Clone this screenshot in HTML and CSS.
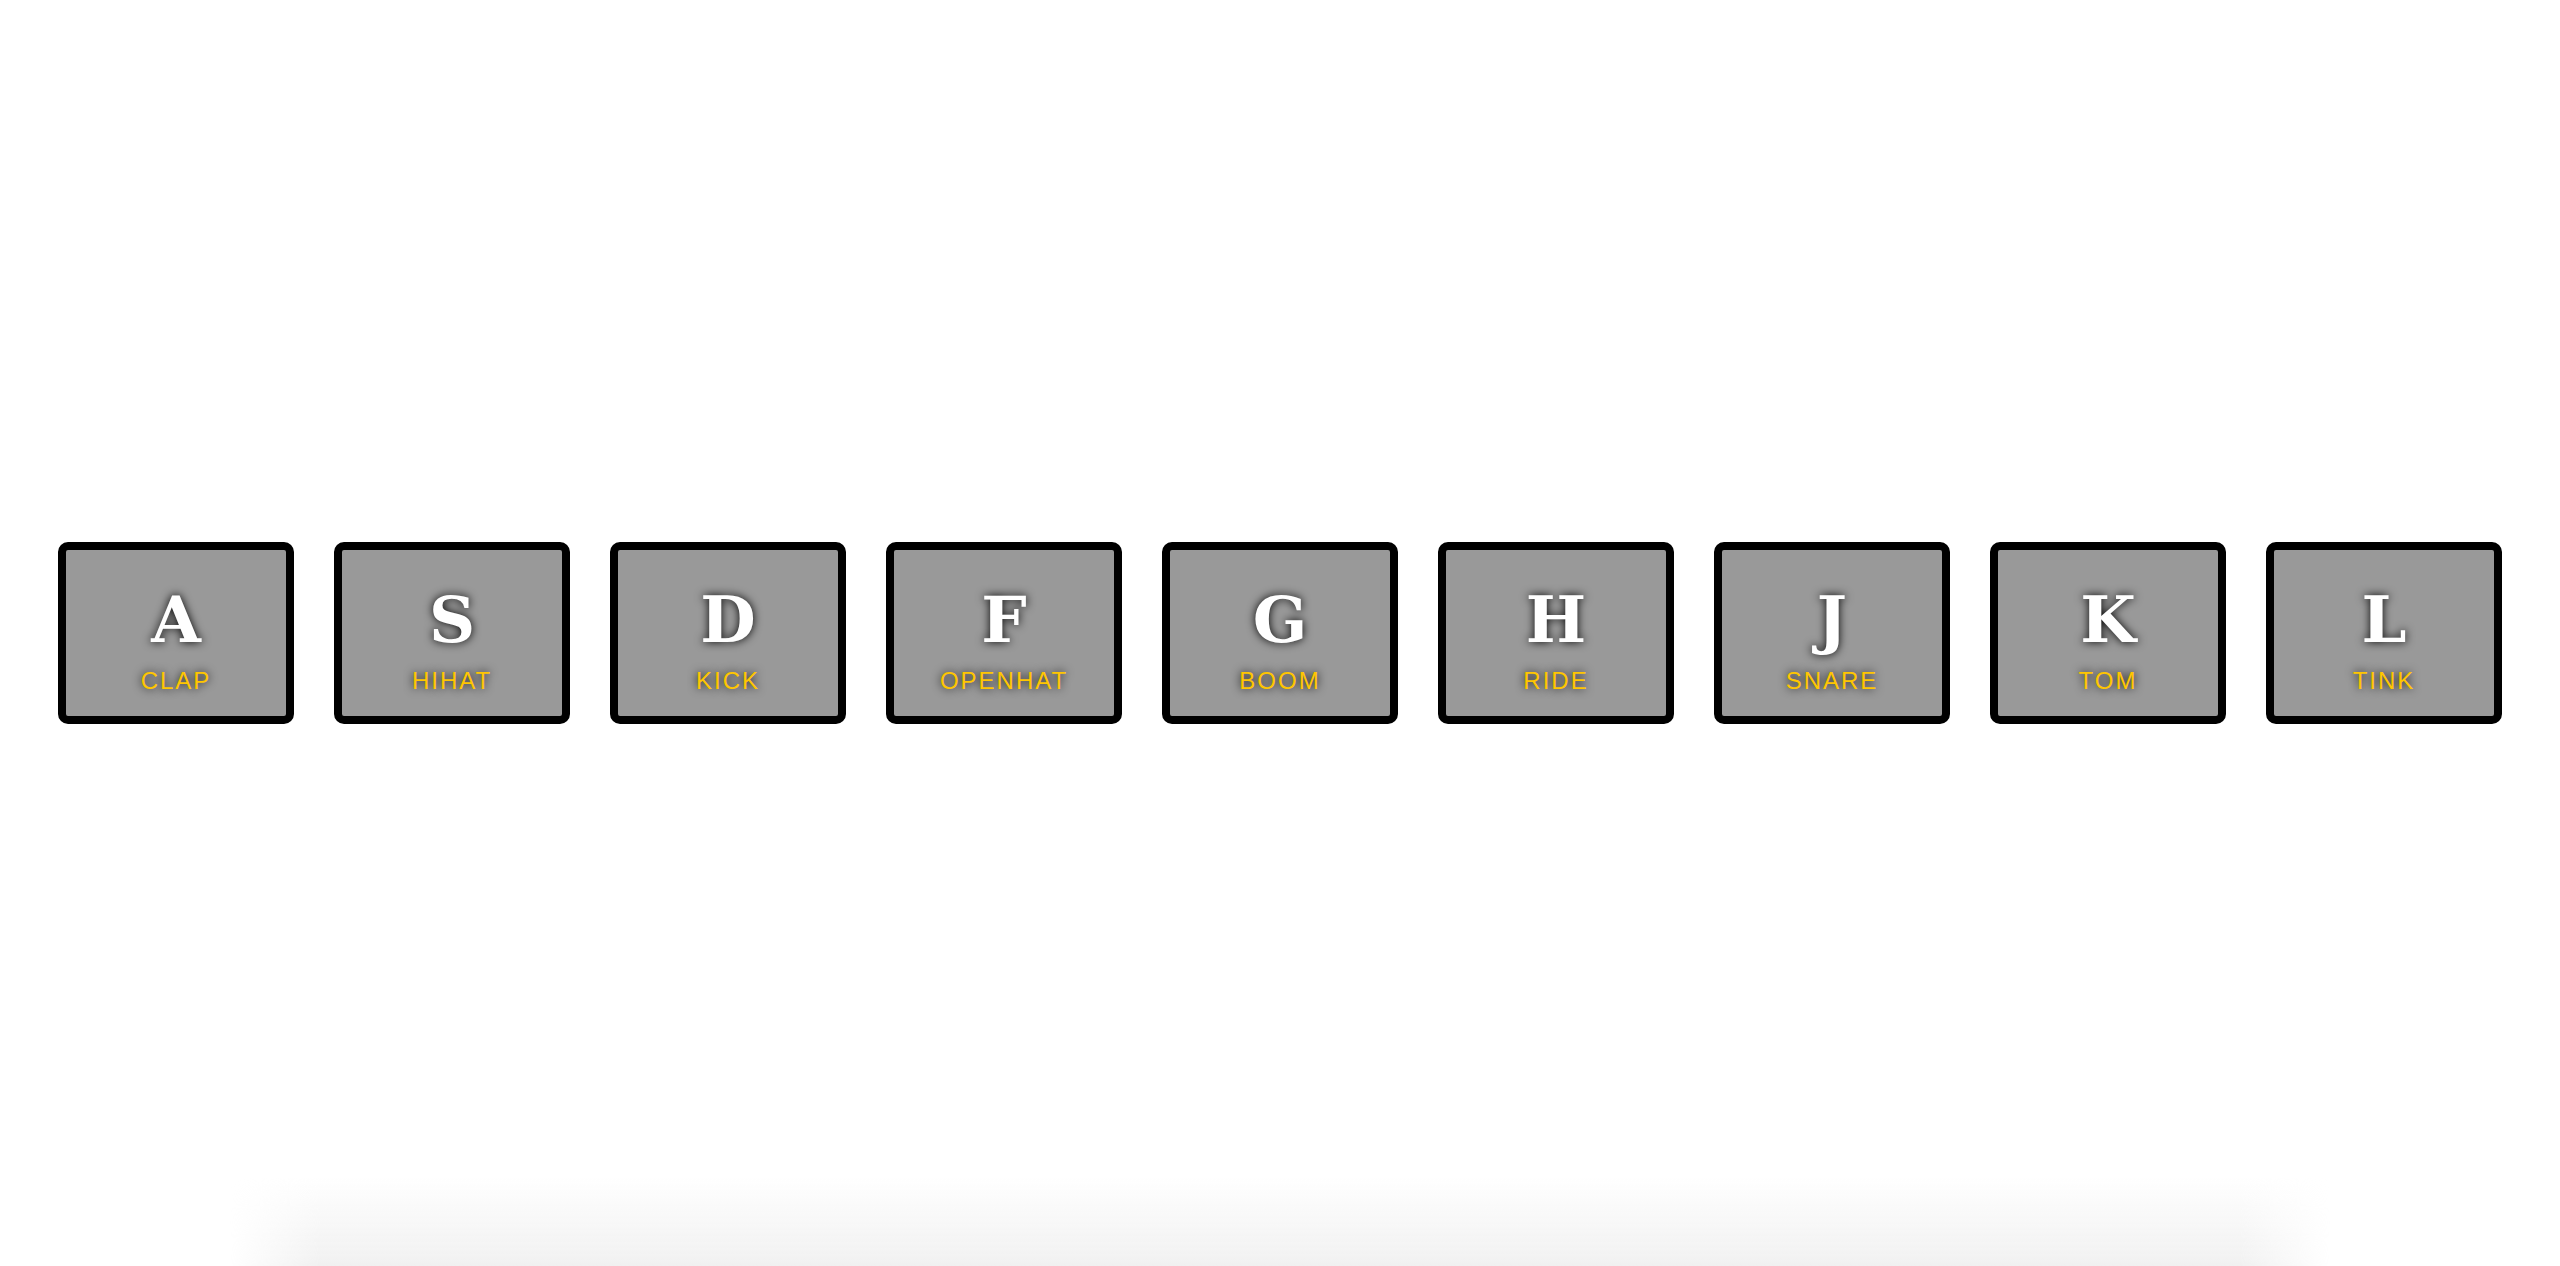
FILE: index.html
```html
<!DOCTYPE html>
<html>
<head>
<meta charset="utf-8">
<title>JS Drum Kit</title>
<link rel="stylesheet" href="styles.css">
</head>
<body>
<div class="keys">
  <div class="key"><kbd>A</kbd><span class="sound">clap</span></div>
  <div class="key"><kbd>S</kbd><span class="sound">hihat</span></div>
  <div class="key"><kbd>D</kbd><span class="sound">kick</span></div>
  <div class="key"><kbd>F</kbd><span class="sound">openhat</span></div>
  <div class="key"><kbd>G</kbd><span class="sound">boom</span></div>
  <div class="key"><kbd>H</kbd><span class="sound">ride</span></div>
  <div class="key"><kbd>J</kbd><span class="sound">snare</span></div>
  <div class="key"><kbd>K</kbd><span class="sound">tom</span></div>
  <div class="key"><kbd>L</kbd><span class="sound">tink</span></div>
</div>
<div class="floor"></div>
</body>
</html>
```

FILE: styles.css
```css
html {
  font-size: 20px;
  background: #ffffff;
}
body, html {
  margin: 0;
  padding: 0;
  font-family: "Liberation Sans", Arial, sans-serif;
}
body {
  position: relative;
  height: 100vh;
  overflow: hidden;
}
.keys {
  display: flex;
  height: 100vh;
  align-items: center;
  justify-content: center;
}
.key {
  border: 0.4rem solid black;
  border-radius: 0.5rem;
  margin: 1rem;
  font-size: 1.5rem;
  padding: 1rem 0.5rem;
  width: 10rem;
  text-align: center;
  color: white;
  background: rgba(0, 0, 0, 0.4);
  text-shadow: 0 0 0.5rem black;
}
kbd {
  display: block;
  font-size: 64px;
  line-height: 84px;
  padding-top: 8px;
  font-family: "DejaVu Serif", "Liberation Serif", serif;
  font-weight: bold;
}
.sound {
  font-size: 1.2rem;
  text-transform: uppercase;
  letter-spacing: 0.1rem;
  color: #ffc600;
}
.floor {
  position: absolute;
  left: 230px;
  right: 230px;
  bottom: 0;
  height: 90px;
  background: linear-gradient(to bottom, rgba(240, 240, 240, 0), #f1f1f1);
  -webkit-mask-image: linear-gradient(to right, transparent 0, #000 90px, #000 calc(100% - 90px), transparent 100%);
  mask-image: linear-gradient(to right, transparent 0, #000 90px, #000 calc(100% - 90px), transparent 100%);
}
```
